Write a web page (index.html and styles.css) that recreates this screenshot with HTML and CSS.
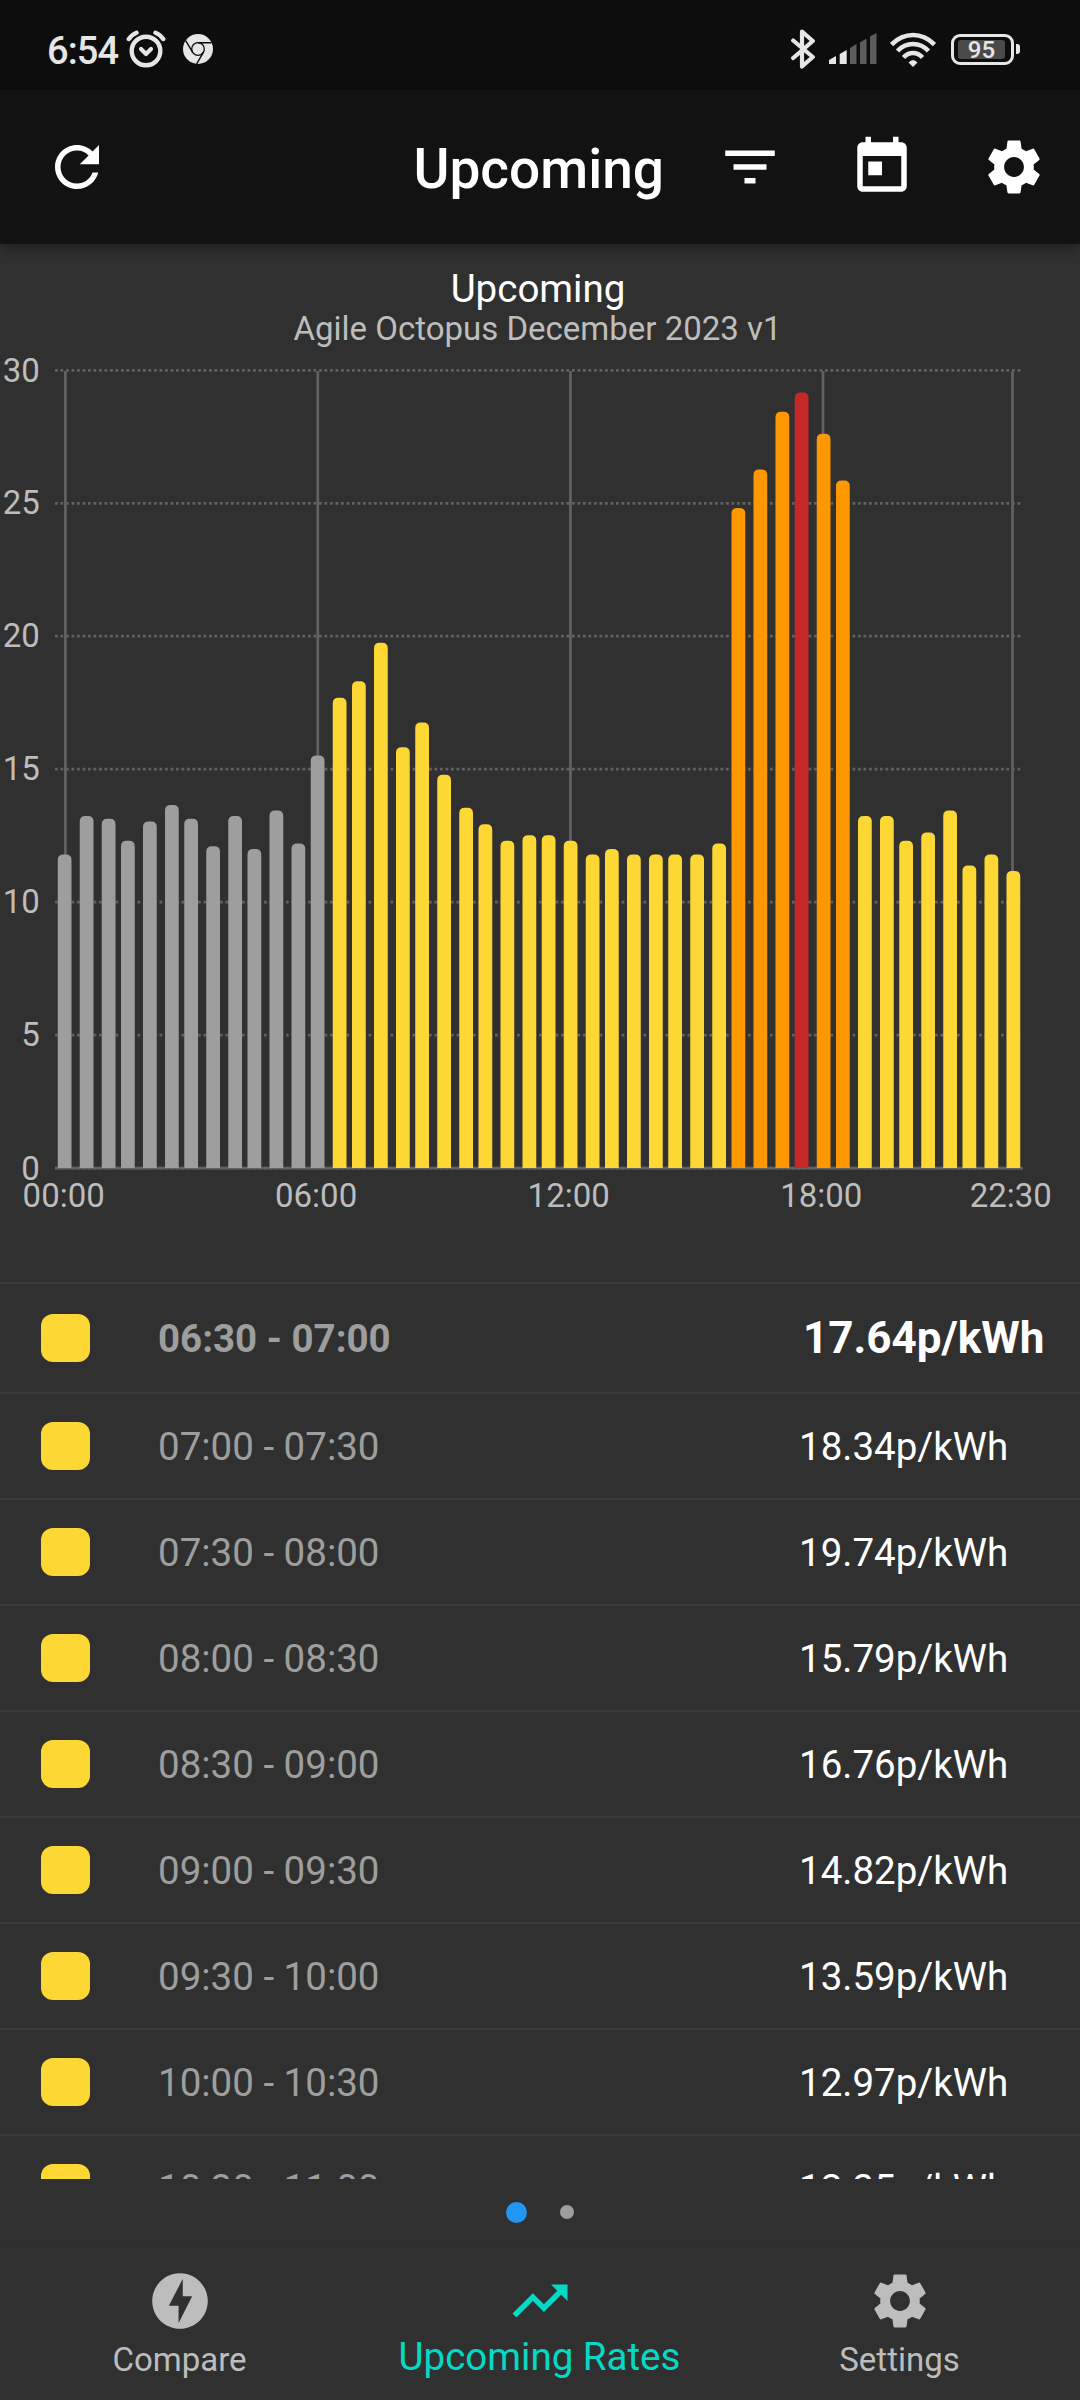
FILE: index.html
```html
<!DOCTYPE html>
<html lang="en">
<head>
<meta charset="utf-8">
<title>Upcoming</title>
<link rel="stylesheet" href="styles.css">
</head>
<body>
<div class="screen">
  <div class="status">
    <span class="clock">6:54</span>
    <svg class="alarm" viewBox="0 0 40 38" fill="none" stroke="#e6e6e6"><circle cx="20" cy="21" r="14.300" stroke-width="4.400"/><path d="M2.800 9Q6 4.500 10.500 2.800M29.500 2.800Q34 4.500 37.200 9" stroke-width="4.400" stroke-linecap="round"/><path d="M15 19l5 5 5-5" stroke-width="4.200" stroke-linecap="round" stroke-linejoin="round"/></svg>
    <svg class="chrome" viewBox="0 0 30 30"><circle cx="15" cy="15" r="15" fill="#e6e6e6"/><circle cx="15" cy="15" r="6.300" fill="none" stroke="#0d0d0d" stroke-width="1.300"/><path d="M15 8.700H28.500M9.500 18.200L2.700 6.600M20.500 18.200L13.700 29.900" stroke="#0d0d0d" stroke-width="1.400"/></svg>
    <div class="status-right">
      <svg class="bt" viewBox="0 0 24 40" fill="none" stroke="#e6e6e6" stroke-width="4.200" stroke-linecap="round" stroke-linejoin="round"><path d="M2.200 11.500L21.800 28 11 37.500V2.500L21.800 12 2.200 29"/></svg>
      <svg class="signal" viewBox="0 0 48 32"><g fill="#e6e6e6"><path d="M0 27l7-4V31H0zM10.700 21l7-4V31h-7z"/></g><g fill="#5c5c5c"><path d="M21 15l6.500-4v20H21zM31 9.500l6.500-4V31H31zM41 3.500l6.500-3.500V31H41z"/></g></svg>
      <svg class="wifi" viewBox="0 0 46 35" fill="none" stroke="#e6e6e6" stroke-width="4.600"><path d="M1.500 12.500Q11 3 23 3t21.500 9.500M7.500 19Q14 12 23 12t15.500 7M13.500 25.500Q17.500 21 23 21t9.500 4.500"/><path d="M18.500 30.500Q23 25.500 27.500 30.500L23 35z" fill="#e6e6e6" stroke="none"/></svg>
      <div class="battery"><div class="level">95</div></div><div class="nub"></div>
    </div>
  </div>
  <header class="appbar">
    <svg class="icon" viewBox="0 0 24 24"><path d="M17.650 6.350C16.200 4.900 14.210 4 12 4c-4.420 0-7.990 3.580-7.990 8s3.570 8 7.990 8c3.730 0 6.840-2.550 7.730-6h-2.080c-.82 2.330-3.040 4-5.650 4-3.310 0-6-2.690-6-6s2.690-6 6-6c1.660 0 3.140.69 4.220 1.780L13 11h7V4l-2.350 2.350z"/></svg>
    <h1 class="title">Upcoming</h1>
    <svg class="icon" viewBox="0 0 24 24"><path d="M10 18h4v-2h-4v2zM3 6v2h18V6H3zm3 7h12v-2H6v2z"/></svg>
    <svg class="icon" viewBox="0 0 24 24"><path d="M19 3h-1V1h-2v2H8V1H6v2H5c-1.110 0-1.990.9-1.990 2L3 19c0 1.100.89 2 2 2h14c1.100 0 2-.9 2-2V5c0-1.100-.9-2-2-2zm0 16H5V8h14v11zM7 10h5v5H7z"/></svg>
    <svg class="icon" viewBox="0 0 24 24"><use href="#gear"/></svg>
  </header>

  <section class="chart">
    <h2 class="chart-title">Upcoming</h2>
    <p class="chart-sub">Agile Octopus December 2023 v1</p>
    <svg class="plot" viewBox="0 0 1080 886" id="plot"></svg>
  </section>

  <main class="rates">
    <div class="row current"><i></i><span class="time">06:30 - 07:00</span><span class="price">17.64p/kWh</span></div>
    <div class="row"><i></i><span class="time">07:00 - 07:30</span><span class="price">18.34p/kWh</span></div>
    <div class="row"><i></i><span class="time">07:30 - 08:00</span><span class="price">19.74p/kWh</span></div>
    <div class="row"><i></i><span class="time">08:00 - 08:30</span><span class="price">15.79p/kWh</span></div>
    <div class="row"><i></i><span class="time">08:30 - 09:00</span><span class="price">16.76p/kWh</span></div>
    <div class="row"><i></i><span class="time">09:00 - 09:30</span><span class="price">14.82p/kWh</span></div>
    <div class="row"><i></i><span class="time">09:30 - 10:00</span><span class="price">13.59p/kWh</span></div>
    <div class="row"><i></i><span class="time">10:00 - 10:30</span><span class="price">12.97p/kWh</span></div>
    <div class="row"><i></i><span class="time">10:30 - 11:00</span><span class="price">12.35p/kWh</span></div>
  </main>
  <div class="dots"><b class="on"></b><b></b></div>

  <nav class="tabs">
    <div class="tab"><svg class="icon" viewBox=".15 .15 23.700 23.700"><path d="M12 2.020c-5.510 0-9.980 4.470-9.980 9.980s4.470 9.980 9.980 9.980 9.980-4.470 9.980-9.980S17.510 2.020 12 2.020zM11.480 20v-6.260H8L13 4v6.260h3.350L11.480 20z"/></svg><span>Compare</span></div>
    <div class="tab active"><svg class="icon" viewBox="0 0 24 24"><path d="M16 6l2.290 2.290-4.880 4.880-4-4L2 16.590 3.410 18l6-6 4 4 6.300-6.290L22 12V6z"/></svg><span>Upcoming Rates</span></div>
    <div class="tab"><svg class="icon" viewBox="0 0 24 24"><path id="gear" d="M19.140 12.940c.04-.3.06-.61.06-.94 0-.32-.02-.64-.07-.94l2.030-1.580c.18-.14.230-.41.120-.61l-1.920-3.320c-.12-.22-.37-.29-.59-.22l-2.390.96c-.5-.38-1.030-.7-1.620-.94l-.36-2.540c-.04-.24-.24-.41-.48-.41h-3.840c-.24 0-.43.17-.47.41l-.36 2.540c-.59.24-1.130.57-1.620.94l-2.390-.96c-.22-.08-.47 0-.59.22L2.740 8.870c-.12.21-.08.47.12.61l2.030 1.580c-.05.3-.09.63-.09.94s.02.640.070.940l-2.030 1.580c-.18.140-.23.410-.12.610l1.920 3.320c.12.220.370.290.590.220l2.390-.96c.5.380 1.030.7 1.620.940l.360 2.540c.05.240.240.410.480.410h3.840c.24 0 .44-.17.470-.41l.36-2.540c.59-.24 1.130-.56 1.620-.94l2.390.96c.22.080.470 0 .59-.22l1.920-3.320c.12-.22.070-.47-.12-.61l-2.010-1.580zM12 15.600c-1.980 0-3.600-1.620-3.600-3.600s1.620-3.600 3.600-3.600 3.600 1.620 3.600 3.600-1.620 3.600-3.600 3.600z"/></svg><span>Settings</span></div>
  </nav>
</div>
<script src="chart.js"></script>
</body>
</html>
```
FILE: styles.css
```css
* { box-sizing: border-box; margin: 0; padding: 0; }
body { background: #303030; font-family: Roboto, "Liberation Sans", sans-serif; }
.screen { width: 1080px; height: 2400px; display: flex; flex-direction: column; overflow: hidden; background: #303030; }
.status { height: 90px; flex: none; background: #0d0d0d; display: flex; align-items: center; padding: 8px 60px 0 47px; }
.clock { color: #e6e6e6; font-size: 38px; font-weight: 500; letter-spacing: -.9px; line-height: 44px; padding-top: 3px; width: 79px; }
.alarm { width: 40px; height: 38px; }
.chrome { width: 30px; height: 30px; margin-left: 17px; }
.status-right { margin-left: auto; display: flex; align-items: center; }
.bt { width: 24px; height: 40px; }
.signal { width: 48px; height: 32px; margin-left: 14px; }
.wifi { width: 46px; height: 35px; margin-left: 13px; }
.battery { width: 63px; height: 31px; margin-left: 15px; border: 3.500px solid #e6e6e6; border-radius: 9px; padding: 3px 4px; }
.level { width: 47px; height: 19px; background: #4a4a4a; border-radius: 3px; color: #e6e6e6; font-size: 24px; font-weight: 500; line-height: 21px; text-align: center; }
.nub { width: 4px; height: 10px; margin-left: 2px; border-radius: 0 3px 3px 0; background: #e6e6e6; }

.appbar { height: 154px; flex: none; background: #121212; display: flex; align-items: center; padding: 0 33px 0 44px; position: relative; box-shadow: 0 4px 14px rgba(0, 0, 0, .4); }
.icon { width: 66px; height: 66px; fill: currentColor; display: block; flex: none; }
.appbar .icon { color: #fff; }
.appbar .icon + .icon { margin-left: 66px; }
.title { margin-left: auto; margin-right: 53px; color: #fff; font-size: 55px; font-weight: 500; line-height: 64px; padding-top: 4px; }

.chart { height: 1038px; flex: none; text-align: center; color: #bdbdbd; padding-top: 22px; }
.chart-title { color: #fff; font-size: 38.500px; font-weight: 400; line-height: 45px; padding-right: 4px; }
.chart-sub { font-size: 33px; line-height: 36px; height: 38px; padding-right: 5px; }
.plot { display: block; width: 1080px; height: 886px; }
.plot text { fill: #bdbdbd; font-size: 33px; }
.x-label { text-anchor: middle; }
.y-label { text-anchor: end; }
.axis { stroke: #616161; stroke-width: 2.750; }
.dotted { stroke-dasharray: 2.750; }

.rates { height: 897px; flex: none; overflow: hidden; }
.row { height: 106px; border-top: 2px solid #3c3c3c; display: flex; align-items: center; padding-left: 41px; font-size: 38.500px; }
.row i { width: 48.500px; height: 48px; border-radius: 12px; background: #fdd835; }
.time { width: 641px; margin-left: 68.500px; color: #9e9e9e; }
.price { color: #fff; }
.current { height: 110px; font-weight: 700; }
.current .time { width: 645px; }
.current .price { font-size: 44px; }

.dots { height: 64px; flex: none; display: flex; align-items: center; justify-content: center; gap: 33px; padding-top: 2px; }
.dots b { width: 14px; height: 14px; border-radius: 50%; background: #9e9e9e; }
.dots .on { width: 21px; height: 21px; background: #2196f3; }

.tabs { flex: 1; display: grid; grid-template-columns: repeat(3, 1fr); background: #303030; border-top: 1px solid #2d2d2d; }
.tab { color: #bdbdbd; font-size: 33px; text-align: center; padding-top: 24px; }
.tab .icon { margin: 0 auto; }
.tab span { display: block; line-height: 40px; padding: 6px 1px 0 0; }
.tab.active { color: #03dac6; font-size: 38.500px; }
.tab.active span { padding-top: 3px; }
```
FILE: chart.js
```js
// Half-hourly rates, drawn on a pixel grid of 2.75 device pixels per unit.
const UNIT = 2.75;
const BASE = 819;
const heights = [114,128,127,119,126,132,127,117,128,116,130,118,150,171,177,191,153,162,143,131,125,119,121,121,119,114,116,114,114,114,114,118,240,254,275,282,267,250,128,128,119,122,130,110,114,108];
const lefts = [21,29,37,44,52,60,67,75,83,90,98,106,113,121,128,136,144,151,159,167,174,182,190,197,205,213,220,228,236,243,251,259,266,274,282,289,297,304,312,320,327,335,343,350,358,366];
const colour = i => i < 13 ? '#9e9e9e' : i === 35 ? '#c62828' : i >= 32 && i <= 37 ? '#ff9800' : '#fdd835';

let out = '';
for (let n = 0; n <= 6; n++) {
  const y = BASE - n * 132.94;
  out += `<line class="axis dotted" x1="55" x2="1020.500" y1="${y}" y2="${y}"/>`;
  out += `<text class="y-label" x="39.800" y="${y + 11 + (n === 6 ? 1 : n ? -0.5 : 0.5)}">${n * 5}</text>`;
}
[[65.4, '00:00'], [317.8, '06:00'], [570.4, '12:00'], [823, '18:00'], [1012.500, '22:30']].forEach(([x, label]) => {
  out += `<line class="axis" x1="${x}" x2="${x}" y1="22" y2="${BASE}"/>`;
  out += `<text class="x-label" x="${x - 1.7}" y="858">${label}</text>`;
});
out += `<line class="axis" x1="55" x2="1023" y1="${BASE}" y2="${BASE}"/>`;
heights.forEach((h, i) => {
  const x = lefts[i] * UNIT, y = BASE - h * UNIT, r = 5.5;
  out += `<path fill="${colour(i)}" d="M${x} ${BASE}V${y + r}q0 ${-r} ${r} ${-r}h${5 * UNIT - 2 * r}q${r} 0 ${r} ${r}V${BASE}z"/>`;
});
document.getElementById('plot').innerHTML = out;
```
